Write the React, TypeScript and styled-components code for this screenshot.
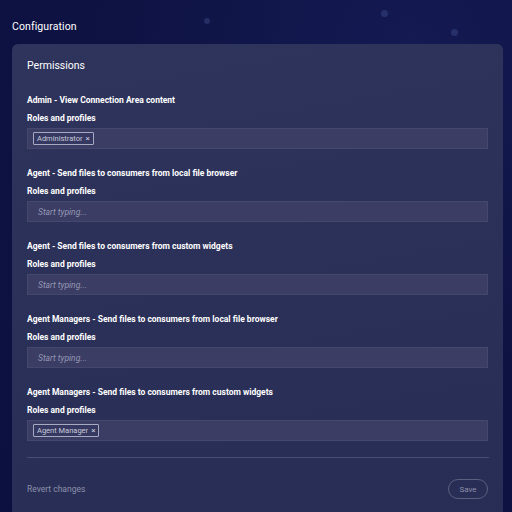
import React from "react";
import styled, { createGlobalStyle } from "styled-components";

const Global = createGlobalStyle`
    html, body {
        margin: 0;
        padding: 0;
        height: 100%;
        background: #0f1344;
        font-family: Roboto, "Liberation Sans", Arial, sans-serif;
        color: #ffffff;
    }
    #root {
        height: 100%;
    }
`;

const Page = styled.div`
    position: relative;
    width: 512px;
    height: 512px;
    overflow: hidden;
    background: radial-gradient(circle at 80% 10%, #141a52 0%, #0f1344 45%, #0c1040 100%);
    padding: 20px 9px 0 12px;
    box-sizing: border-box;
`;

const Dot = styled.span<{ size: number }>`
    position: absolute;
    width: ${({ size }) => size}px;
    height: ${({ size }) => size}px;
    border-radius: 50%;
    background: rgba(110, 130, 200, 0.22);
`;

const PageTitle = styled.h1`
    margin: 0 0 10px 0;
    font-size: 10.5px;
    font-weight: 400;
    line-height: 14px;
    letter-spacing: 0.1px;
`;

const Card = styled.div`
    position: relative;
    background: linear-gradient(170deg, #2f345c 0%, #2b3059 50%, #282d55 100%);
    border-radius: 6px;
    padding: 15px 15px 40px 15px;
    min-height: 480px;
    box-sizing: border-box;
`;

const CardTitle = styled.h2`
    margin: 0 0 21px 0;
    font-size: 10.5px;
    font-weight: 400;
    line-height: 14px;
`;

const Section = styled.div`
    display: flex;
    flex-direction: column;
    margin-bottom: 18px;
`;

const SectionTitle = styled.div`
    font-size: 8.5px;
    font-weight: 700;
    line-height: 12px;
    margin-bottom: 6px;
`;

const FieldLabel = styled.div`
    font-size: 8.5px;
    font-weight: 700;
    line-height: 12px;
    margin-bottom: 4px;
`;

const Input = styled.div`
    display: flex;
    align-items: center;
    height: 21px;
    box-sizing: border-box;
    padding: 0 5px;
    background: #3b3d64;
    border: 1px solid #45486e;
    gap: 4px;
`;

const Placeholder = styled.span`
    font-size: 8.5px;
    font-style: italic;
    color: #9597b4;
    padding-left: 5px;
`;

const Chip = styled.span`
    display: inline-flex;
    align-items: center;
    gap: 3px;
    height: 13px;
    box-sizing: border-box;
    padding: 0 3px;
    border: 1px solid #a7a9c0;
    border-radius: 1px;
    font-size: 7.5px;
    color: #c9cadb;
    background: #353860;
`;

const ChipClose = styled.span`
    font-size: 8px;
    line-height: 1;
    color: #d0d1e0;
`;

const Divider = styled.hr`
    border: none;
    border-top: 1px solid #4a4d72;
    margin: -2px -1px 0 0;
`;

const Footer = styled.div`
    display: flex;
    justify-content: space-between;
    align-items: center;
    margin-top: 21px;
`;

const TextButton = styled.button`
    background: none;
    border: none;
    padding: 0;
    font-family: inherit;
    font-size: 8.5px;
    color: #8d8fa9;
`;

const PillButton = styled.button`
    width: 40px;
    height: 20px;
    border-radius: 10px;
    border: 1px solid #5c5f80;
    background: transparent;
    font-family: inherit;
    font-size: 8px;
    color: #8d8fa9;
    padding: 0;
`;

interface IPermission {
    title: string;
    roles: string[];
}

const permissions: IPermission[] = [
    { title: "Admin - View Connection Area content", roles: ["Administrator"] },
    { title: "Agent - Send files to consumers from local file browser", roles: [] },
    { title: "Agent - Send files to consumers from custom widgets", roles: [] },
    { title: "Agent Managers - Send files to consumers from local file browser", roles: [] },
    { title: "Agent Managers - Send files to consumers from custom widgets", roles: ["Agent Manager"] },
];

const App = () => {
    return (
        <Page>
            <Global />
            <Dot size={7} style={{ left: 381, top: 10 }} />
            <Dot size={7} style={{ left: 451, top: 29 }} />
            <Dot size={6} style={{ left: 204, top: 18 }} />
            <PageTitle>Configuration</PageTitle>
            <Card>
                <CardTitle>Permissions</CardTitle>
                {permissions.map((p) => (
                    <Section key={p.title}>
                        <SectionTitle>{p.title}</SectionTitle>
                        <FieldLabel>Roles and profiles</FieldLabel>
                        <Input>
                            {p.roles.length === 0 && <Placeholder>Start typing...</Placeholder>}
                            {p.roles.map((r) => (
                                <Chip key={r}>
                                    {r}
                                    <ChipClose>×</ChipClose>
                                </Chip>
                            ))}
                        </Input>
                    </Section>
                ))}
                <Divider />
                <Footer>
                    <TextButton>Revert changes</TextButton>
                    <PillButton>Save</PillButton>
                </Footer>
            </Card>
        </Page>
    );
};

export default App;
